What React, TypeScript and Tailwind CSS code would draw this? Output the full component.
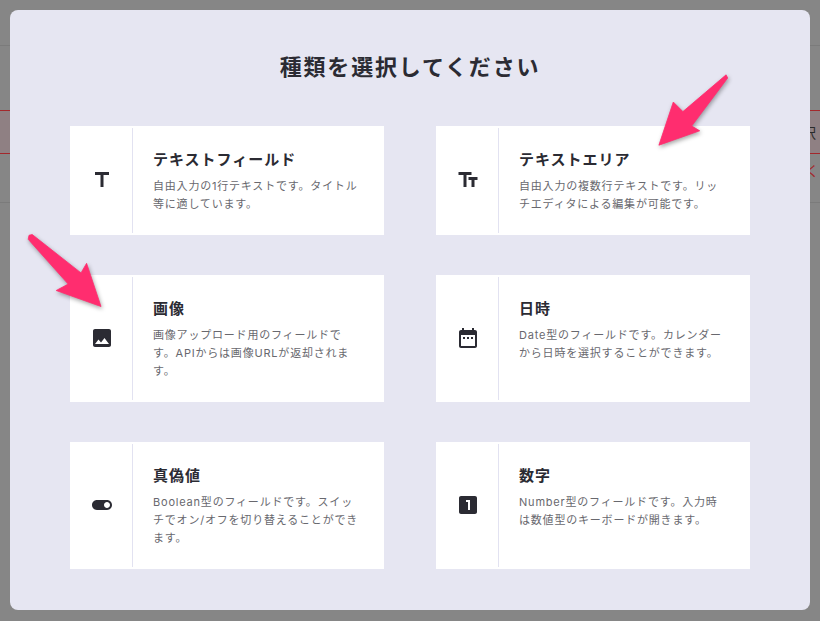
const FONT = "font-['Inter','Noto_Sans_CJK_JP',sans-serif]";

const FIELD_TYPES = [
  {
    title: 'テキストフィールド',
    text: '自由入力の1行テキストです。タイトル等に適しています。',
    icon: 'M5 4v3h5.5v12h3V7H19V4z',
    height: 'h-[109px]',
  },
  {
    title: 'テキストエリア',
    text: '自由入力の複数行テキストです。リッチエディタによる編集が可能です。',
    icon: 'M2.5 4v3h5v12h3V7h5V4h-13zm19 5h-9v3h3v7h3v-7h3V9z',
    height: 'h-[109px]',
  },
  {
    title: '画像',
    text: '画像アップロード用のフィールドです。APIからは画像URLが返却されます。',
    icon: 'M21 19V5c0-1.1-.9-2-2-2H5c-1.1 0-2 .9-2 2v14c0 1.1.9 2 2 2h14c1.1 0 2-.9 2-2zM8.5 13.5l2.5 3.01L14.5 12l4.5 6H5l3.5-4.5z',
    height: 'h-[127px]',
  },
  {
    title: '日時',
    text: 'Date型のフィールドです。カレンダーから日時を選択することができます。',
    icon: 'M9 11H7v2h2v-2zm4 0h-2v2h2v-2zm4 0h-2v2h2v-2zm2-7h-1V2h-2v2H8V2H6v2H5c-1.11 0-1.99.9-1.99 2L3 20c0 1.1.89 2 2 2h14c1.1 0 2-.9 2-2V6c0-1.1-.9-2-2-2zm0 16H5V9h14v11z',
    height: 'h-[127px]',
  },
  {
    title: '真偽値',
    text: 'Boolean型のフィールドです。スイッチでオン/オフを切り替えることができます。',
    icon: 'M17 7H7c-2.76 0-5 2.24-5 5s2.24 5 5 5h10c2.76 0 5-2.24 5-5s-2.24-5-5-5zm0 8c-1.66 0-3-1.34-3-3s1.34-3 3-3 3 1.34 3 3-1.34 3-3 3z',
    height: 'h-[127px]',
  },
  {
    title: '数字',
    text: 'Number型のフィールドです。入力時は数値型のキーボードが開きます。',
    icon: 'M19 3H5c-1.1 0-2 .9-2 2v14c0 1.1.9 2 2 2h14c1.1 0 2-.9 2-2V5c0-1.1-.9-2-2-2zm-5 14h-2V9h-2V7h4v10z',
    height: 'h-[127px]',
  },
];

function TypeCard({ title, text, icon, height }: (typeof FIELD_TYPES)[number]) {
  return (
    <div className={`flex bg-white py-0.5 ${height}`}>
      <div className="flex w-[63px] shrink-0 items-center justify-center border-r border-[#e2e2f1] pb-px pl-0.5">
        <svg className="h-6 w-6 fill-[#2b2b33]" viewBox="0 0 24 24">
          <path d={icon} />
        </svg>
      </div>
      <div className="flex-1 pl-5 pr-[22px] pt-[21px]">
        <h3 className="text-[15px] font-bold leading-[22px] tracking-[1px] text-[#2b2b33]">{title}</h3>
        <p className="mt-1.5 text-[11px] leading-[18px] tracking-[0.8px] text-[#68686e]">{text}</p>
      </div>
    </div>
  );
}

function Arrow({ className, points }: { className: string; points: string }) {
  return (
    <svg className={`pointer-events-none absolute drop-shadow-[1px_2px_2px_rgba(0,0,0,0.35)] ${className}`} viewBox="0 0 100 100">
      <polygon points={points} fill="#ff2d6f" stroke="#ff2d6f" strokeLinejoin="round" />
    </svg>
  );
}

export default function App() {
  return (
    <div className={`relative h-[621px] w-[820px] overflow-hidden bg-[#868686] ${FONT}`}>
      {/* page behind the overlay */}
      <div className="h-[46px] border-b border-[#7b7b7b]" />
      <div className="mt-16 flex h-11 items-center justify-end border-y border-[#a3282c] bg-[#8f8083] pr-1 text-[14px] text-[#2b2b2b]">
        選択
      </div>
      <div className="flex h-[49px] items-start justify-end border-b border-[#7b7b7b] pr-px pt-1.5 text-[14px] text-[#a3282c]">
        く
      </div>

      <div className="absolute inset-x-2.5 bottom-[11px] top-2.5 rounded-lg bg-[#e6e6f2] px-[60px]">
        <h2 className="mt-[41px] text-center text-[22px] font-bold leading-8 tracking-[1.8px] text-[#2b2b33]">
          種類を選択してください
        </h2>
        <div className="mt-[43px] grid grid-cols-2 gap-x-[52px] gap-y-10">
          {FIELD_TYPES.map((type) => (
            <TypeCard key={type.title} {...type} />
          ))}
        </div>
      </div>

      <Arrow
        className="left-[650px] top-[70px] h-[80px] w-[85px]"
        points="92,6 94,10 49,70 59,76 8,94 26,40 38,52"
      />
      <Arrow
        className="left-[25px] top-[228px] h-[85px] w-[80px]"
        points="4,11 5,6 9,5 70,53 77,41 95,95 39,75 54,67"
      />
    </div>
  );
}
